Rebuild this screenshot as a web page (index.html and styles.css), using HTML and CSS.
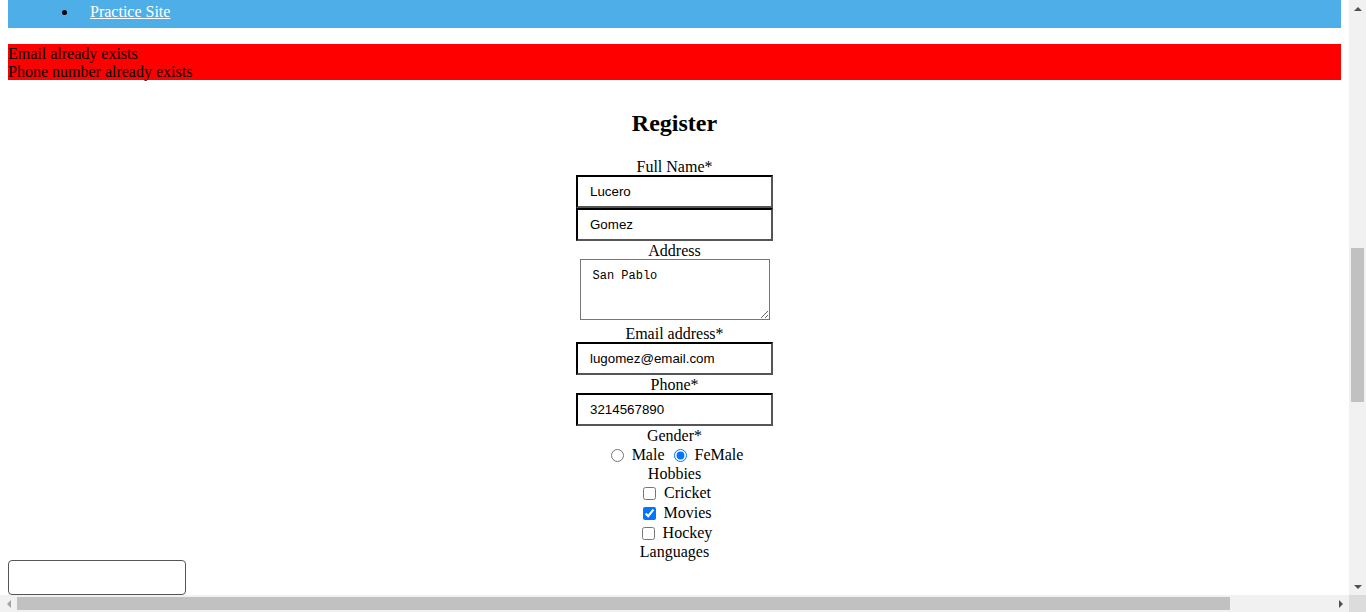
FILE: index.html
```html
<!DOCTYPE html>
<html>
<head>
<meta charset="utf-8">
<title>Register</title>
<link rel="stylesheet" href="styles.css">
</head>
<body>
<div class="window">
  <div class="viewport">
    <div class="page">
      <nav class="topnav">
        <ul>
          <li><a href="#">Practice Site</a></li>
        </ul>
      </nav>
      <div class="errors">
        <div class="err">Email already exists</div>
        <div class="err">Phone number already exists</div>
      </div>
      <form class="register">
        <h2>Register</h2>
        <label class="lbl">Full Name*</label>
        <input class="field" type="text" value="Lucero">
        <input class="field" type="text" value="Gomez">
        <label class="lbl">Address</label>
        <textarea class="addr">San Pablo</textarea>
        <label class="lbl">Email address*</label>
        <input class="field" type="email" value="lugomez@email.com">
        <label class="lbl">Phone*</label>
        <input class="field" type="tel" value="3214567890">
        <label class="lbl">Gender*</label>
        <div class="row"><input type="radio" name="g"> Male <input type="radio" name="g" checked> FeMale</div>
        <label class="lbl">Hobbies</label>
        <div class="row"><input type="checkbox"> Cricket</div>
        <div class="row"><input type="checkbox" checked> Movies</div>
        <div class="row"><input type="checkbox"> Hockey</div>
        <label class="lbl">Languages</label>
      </form>
      <div class="lang-box"></div>
    </div>
  </div>
  <div class="vscroll">
    <div class="sbtn"><span class="arr up"></span></div>
    <div class="vtrack"><div class="vthumb"></div></div>
    <div class="sbtn"><span class="arr down"></span></div>
  </div>
  <div class="hscroll">
    <div class="sbtn"><span class="arr left"></span></div>
    <div class="htrack"><div class="hthumb"></div></div>
    <div class="sbtn"><span class="arr right"></span></div>
  </div>
  <div class="corner"></div>
</div>
</body>
</html>
```

FILE: styles.css
```css
html, body {
  margin: 0;
  padding: 0;
  background: #fff;
}
body {
  font-family: "Liberation Serif", "Times New Roman", serif;
  font-size: 16px;
  color: #000;
}
.window {
  width: 1366px;
  height: 612px;
  display: grid;
  grid-template-columns: 1349px 17px;
  grid-template-rows: 595px 17px;
  overflow: hidden;
}
.viewport {
  overflow: hidden;
  background: #fff;
}
.page {
  margin: 0 8px;
}
.topnav {
  background: #4eaee8;
  height: 28px;
  box-sizing: border-box;
  padding-top: 3px;
}
.topnav ul {
  margin: 0;
  padding-left: 70px;
  line-height: 18px;
  list-style: disc;
}
.topnav a {
  color: #fff;
  padding-left: 12px;
  text-decoration: underline;
}
.errors {
  margin-top: 16px;
  background: #ff0000;
}
.err {
  height: 18px;
  box-sizing: border-box;
  padding-top: 1px;
  line-height: 18px;
}
.register {
  display: flex;
  flex-direction: column;
  align-items: center;
  margin: 0;
}
.register h2 {
  font-size: 24px;
  font-weight: bold;
  line-height: 28px;
  margin: 29px 0 20px;
}
.lbl {
  height: 18px;
  box-sizing: border-box;
  padding-top: 1px;
  line-height: 18px;
}
.field {
  width: 197px;
  height: 33px;
  box-sizing: border-box;
  margin: 0;
  border-width: 2px;
  border-style: solid;
  border-color: #000 #555 #555 #000;
  padding: 0 12px;
  font-family: "Liberation Sans", Arial, sans-serif;
  font-size: 13.33px;
  color: #000;
  background: #fff;
}
.addr {
  width: 190px;
  height: 61px;
  box-sizing: border-box;
  margin: 0 0 4px;
  border: 1px solid #767676;
  padding: 9px 11px 8px 12px;
  font-family: "Liberation Mono", "Courier New", monospace;
  font-size: 12px;
  color: #000;
  resize: both;
}
.row {
  height: 20px;
  box-sizing: border-box;
  padding-top: 1px;
  line-height: 20px;
  white-space: nowrap;
}
.row input {
  margin: 0 4px 0 5px;
  vertical-align: -2px;
}
.lang-box {
  width: 178px;
  height: 35px;
  box-sizing: border-box;
  border: 1px solid #555;
  border-radius: 4px;
}
.vscroll {
  background: #f1f1f1;
  display: flex;
  flex-direction: column;
}
.hscroll {
  background: #f1f1f1;
  display: flex;
}
.corner {
  background: #dcdcdc;
}
.sbtn {
  width: 17px;
  height: 17px;
  flex: none;
  display: flex;
  align-items: center;
  justify-content: center;
}
.vtrack {
  flex: 1;
  padding-top: 231px;
}
.vthumb {
  width: 13px;
  height: 154px;
  margin-left: 2px;
  background: #c1c1c1;
}
.htrack {
  flex: 1;
  display: flex;
  align-items: center;
}
.hthumb {
  width: 1213px;
  height: 13px;
  background: #c1c1c1;
}
.arr {
  width: 0;
  height: 0;
  border-style: solid;
  border-color: transparent;
}
.arr.up {
  border-width: 0 4px 4px 4px;
  border-bottom-color: #505050;
}
.arr.down {
  border-width: 4px 4px 0 4px;
  border-top-color: #505050;
}
.arr.left {
  border-width: 4px 4px 4px 0;
  border-right-color: #a3a3a3;
}
.arr.right {
  border-width: 4px 0 4px 4px;
  border-left-color: #505050;
}
```
